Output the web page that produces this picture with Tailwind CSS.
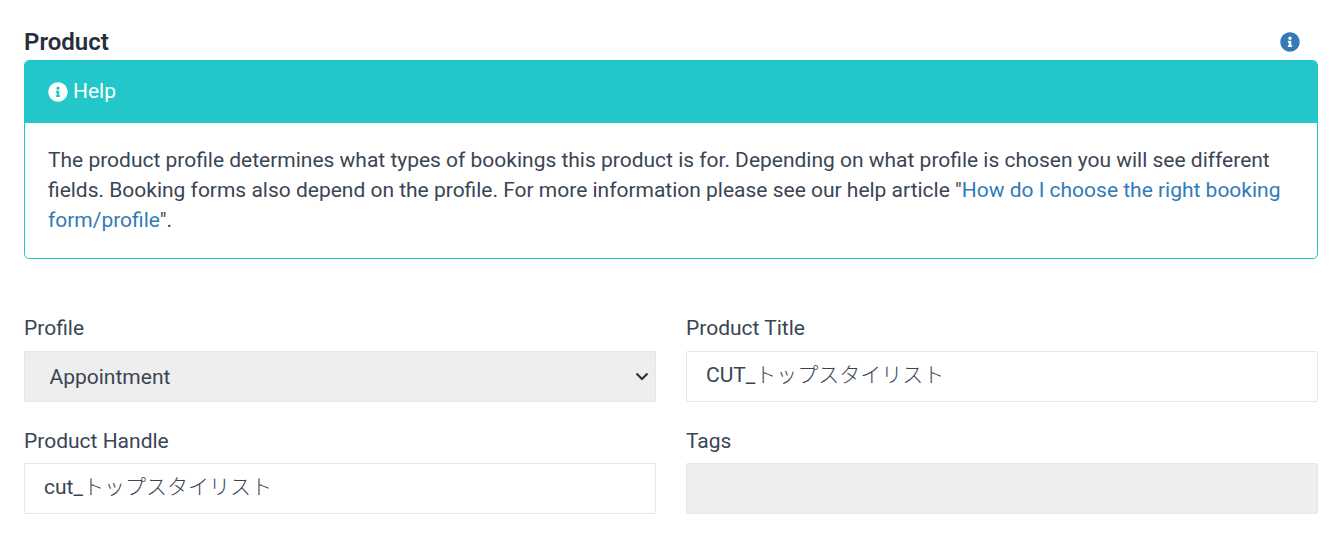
<!DOCTYPE html>
<html lang="en">
<head>
    <meta charset="UTF-8">
    <meta name="viewport" content="width=device-width, initial-scale=1.0">
    <title>Product</title>
    <script src="https://cdn.jsdelivr.net/npm/@tailwindcss/browser@4"></script>
</head>
<body class="bg-white overflow-hidden font-['Roboto','Noto_Sans_CJK_JP',sans-serif] text-[#3a4553]">
    <div class="pl-6 pr-[22px] pt-[26px]">
        <!-- Section title -->
        <div class="flex justify-between h-[34px]">
            <h2 class="text-[24px] leading-[32px] font-semibold text-[#262f3b]">Product</h2>
            <svg class="w-[20px] h-[20px] mt-[5.5px] mr-[18.500px] fill-[#337ab7]" viewBox="0 0 512 512"><path d="M256 8C119.043 8 8 119.083 8 256c0 136.997 111.043 248 248 248s248-111.003 248-248C504 119.083 392.957 8 256 8zm0 110c23.196 0 42 18.804 42 42s-18.804 42-42 42-42-18.804-42-42 18.804-42 42-42zm56 254c0 6.627-5.373 12-12 12h-88c-6.627 0-12-5.373-12-12v-24c0-6.627 5.373-12 12-12h12v-64h-12c-6.627 0-12-5.373-12-12v-24c0-6.627 5.373-12 12-12h64c6.627 0 12 5.373 12 12v100h12c6.627 0 12 5.373 12 12v24z"/></svg>
        </div>

        <!-- Help panel -->
        <div class="border border-[#23c7c9] rounded-[5px] overflow-hidden">
            <div class="bg-[#23c7c9] h-[62px] pl-[22.500px] flex items-center gap-[5.5px] text-white text-[21px]">
                <svg class="w-[20px] h-[20px] fill-white" viewBox="0 0 512 512"><path d="M256 8C119.043 8 8 119.083 8 256c0 136.997 111.043 248 248 248s248-111.003 248-248C504 119.083 392.957 8 256 8zm0 110c23.196 0 42 18.804 42 42s-18.804 42-42 42-42-18.804-42-42 18.804-42 42-42zm56 254c0 6.627-5.373 12-12 12h-88c-6.627 0-12-5.373-12-12v-24c0-6.627 5.373-12 12-12h12v-64h-12c-6.627 0-12-5.373-12-12v-24c0-6.627 5.373-12 12-12h64c6.627 0 12 5.373 12 12v100h12c6.627 0 12 5.373 12 12v24z"/></svg>
                <span>Help</span>
            </div>
            <p class="px-[23px] pt-[22px] pb-[23px] text-[20.990px] leading-[30px]">The product profile determines what types of bookings this product is for. Depending on what profile is chosen you will see different fields. Booking forms also depend on the profile. For more information please see our help article "<a href="#" class="text-[#337ab7]">How do I choose the right booking form/profile</a>".</p>
        </div>

        <!-- Fields -->
        <div class="grid grid-cols-2 gap-x-[30px] gap-y-[24px] mt-[54px]">
            <div>
                <label class="block text-[21px] leading-[30px] mb-[8px]">Profile</label>
                <div class="relative">
                    <select class="w-full h-[51px] appearance-none rounded-[2px] bg-[#eeeeee] border border-[#e6e6e6] pl-[24.500px] pt-[2px] text-[21px] text-[#3a4553] outline-none">
                        <option>Appointment</option>
                    </select>
                    <svg class="absolute right-[7px] top-[19px] w-[14px] h-[14px] stroke-[#263442] fill-none" stroke-width="2.2" viewBox="0 0 14 14"><path d="M1.500 3.500L7 9l5.500-5.500"/></svg>
                </div>
            </div>
            <div>
                <label class="block text-[21px] leading-[30px] mb-[8px]">Product Title</label>
                <div class="h-[51px] flex items-center rounded-[2px] bg-white border border-[#e6e6e6] pl-[19px] pb-[1px] text-[21px]">CUT_<span class="font-light">トップスタイリスト</span></div>
            </div>
            <div>
                <label class="block text-[21px] leading-[30px] mb-[7px]">Product Handle</label>
                <div class="h-[51px] flex items-center rounded-[2px] bg-white border border-[#e6e6e6] pl-[19px] pb-[1px] text-[21px]">cut_<span class="font-light">トップスタイリスト</span></div>
            </div>
            <div>
                <label class="block text-[21px] leading-[30px] mb-[7px]">Tags</label>
                <div class="h-[51px] rounded-[2px] bg-[#eeeeee] border border-[#e6e6e6]"></div>
            </div>
        </div>
    </div>
</body>
</html>
